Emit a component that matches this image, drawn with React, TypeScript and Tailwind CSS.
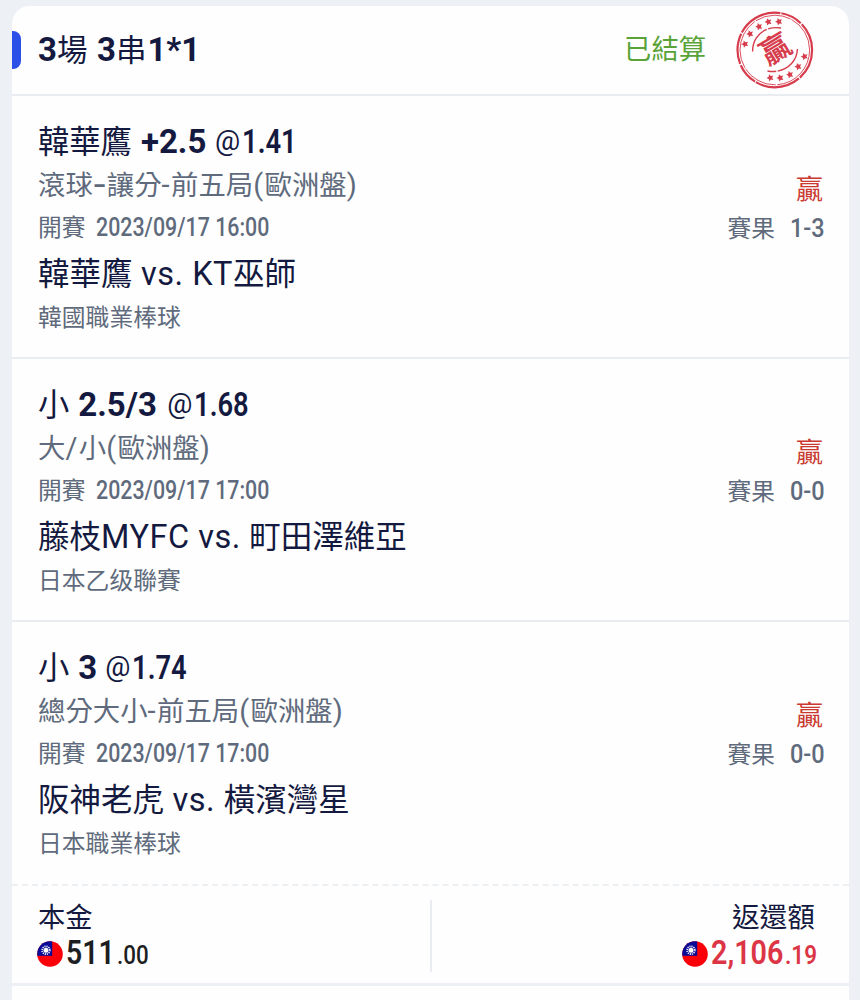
import React from 'react';

const STAMP_RED = '#d63c4c';

function star(cx: number, cy: number, r: number, turn: number) {
  const pts: string[] = [];
  for (let i = 0; i < 10; i++) {
    const a = ((turn + i * 36 - 90) * Math.PI) / 180;
    const rr = i % 2 === 0 ? r : r * 0.5;
    pts.push(`${(cx + rr * Math.cos(a)).toFixed(2)},${(cy + rr * Math.sin(a)).toFixed(2)}`);
  }
  return pts.join(' ');
}

const stars = [
  [10, 34], [15, 23.9], [24, 16.6], [33.3, 11.9], [43.9, 11.6],
  [35.3, 67.8], [45.2, 67.9], [54.9, 64.6], [63.2, 56.6], [69.5, 46.5],
];

function Stamp() {
  return (
    <svg className="block h-[80px] w-[80px]" viewBox="0 0 80 80" fill="none" stroke={STAMP_RED}>
      <circle cx="39.8" cy="40" r="37.3" strokeWidth="2.2" strokeDasharray="31 1.3 46 1 22 1.5" />
      <circle cx="39.8" cy="40" r="34.8" strokeWidth="0.9" strokeDasharray="52 1.5 36 1" />
      <path d="M17.6 41.6C17.5 26.6 29 15.6 46 18" strokeWidth="1.4" strokeDasharray="28 1.5 30" />
      <path d="M62.4 39C62 53.6 48 64 32.5 61" strokeWidth="1.4" strokeDasharray="32 1.5 30" />
      <g fill={STAMP_RED} stroke="none">
        {stars.map(([x, y]) => (
          <polygon key={`${x}-${y}`} points={star(x, y, 3.8, -20)} />
        ))}
        <text
          x="0"
          y="11"
          textAnchor="middle"
          transform="translate(40.3 38.8) rotate(-31)"
          className="font-['Noto_Sans_CJK_TC',sans-serif] text-[30px] font-bold"
        >
          贏
        </text>
      </g>
    </svg>
  );
}

function Flag() {
  return (
    <svg className="block h-[26px] w-[26px] shrink-0" viewBox="0 0 26 26">
      <clipPath id="flag-round">
        <circle cx="13" cy="13" r="12.8" />
      </clipPath>
      <g clipPath="url(#flag-round)">
        <rect width="26" height="26" fill="#fb0008" />
        <rect width="15.2" height="14.8" fill="#0a0a96" />
        <circle cx="9" cy="9.2" r="3.9" fill="none" stroke="#fff" strokeWidth="1.7" strokeDasharray="1.1 0.94" />
        <circle cx="9" cy="9.2" r="2.5" fill="#fff" />
      </g>
    </svg>
  );
}

/** Sets the Latin runs of a mixed string in their own size. */
function Mixed({ text, latin }: { text: string; latin: string }) {
  return (
    <>
      {text.split(/([\x20-\x7e]+)/).map((part, i) =>
        i % 2 === 1 ? (
          <span key={i} className={latin}>
            {part}
          </span>
        ) : (
          part
        ),
      )}
    </>
  );
}

const bets = [
  {
    pick: '韓華鷹',
    line: '+2.5',
    lineClass: 'w-[74px]',
    odds: '1.41',
    phase: '滾球',
    market: '讓分-前五局(歐洲盤)',
    time: '2023/09/17 16:00',
    match: '韓華鷹 vs. KT巫師',
    league: '韓國職業棒球',
    score: '1-3',
  },
  {
    pick: '小',
    line: '2.5/3',
    lineClass: 'w-[89px]',
    odds: '1.68',
    phase: '',
    market: '大/小(歐洲盤)',
    time: '2023/09/17 17:00',
    match: '藤枝MYFC vs. 町田澤維亞',
    league: '日本乙级聯賽',
    score: '0-0',
  },
  {
    pick: '小',
    line: '3',
    lineClass: 'w-[27px]',
    odds: '1.74',
    phase: '',
    market: '總分大小-前五局(歐洲盤)',
    time: '2023/09/17 17:00',
    match: '阪神老虎 vs. 橫濱灣星',
    league: '日本職業棒球',
    score: '0-0',
  },
];

function BetRow({ bet, last }: { bet: (typeof bets)[number]; last: boolean }) {
  return (
    <section
      className={`flex h-[263.2px] justify-between whitespace-nowrap border-b-2 pl-[26px] pr-[26px] pt-6 ${
        last ? 'border-dashed border-[#edf0f3]' : 'border-[#e9edf2]'
      }`}
    >
      <div className="text-[#5f6b7c]">
        <div className="h-[44px] text-[31.3px] leading-[44px] text-[#14193f]">
          <span>{bet.pick}</span>
          <span className={`ml-[9px] inline-block text-[33px] font-bold ${bet.lineClass}`}>{bet.line}</span>
          <span className="relative -top-[3px] inline-block w-[27px] text-[28px]">@</span>
          <span className="inline-block w-[54px] origin-left scale-x-[0.83] text-[33px] font-semibold">{bet.odds}</span>
        </div>
        <div className="h-[42px] text-[27.4px] leading-[42px]">
          {bet.phase && (
            <>
              {bet.phase}
              <span className="inline-block w-[14px] origin-left scale-x-[1.35] text-[29px] font-medium">-</span>
            </>
          )}
          <Mixed text={bet.market} latin="text-[29px] tracking-[1.4px]" />
        </div>
        <div className="h-[42px] text-[23.7px] leading-[42px]">
          開賽
          <span className="ml-[11px] inline-block w-[175px] origin-left scale-x-[0.838] text-[25.5px] font-medium">{bet.time}</span>
        </div>
        <div className="h-[52px] text-[31.5px] leading-[52px] text-[#14193f]">
          <Mixed text={bet.match} latin="text-[32.5px] tracking-[0.5px]" />
        </div>
        <div className="h-[36px] text-[23.8px] leading-[36px]">{bet.league}</div>
      </div>
      <div className="flex flex-col items-end pt-[51px] text-[#5f6b7c]">
        <div className="h-[38px] text-[27px] leading-[38px] text-[#c9392f]">贏</div>
        <div className="h-[38px] text-[23.7px] leading-[38px]">
          賽果
          <span className="ml-[15px] inline-block w-[33px] origin-left scale-x-[0.92] text-[25.5px] font-medium">{bet.score}</span>
        </div>
      </div>
    </section>
  );
}

export default function App() {
  return (
    <main className="h-[1000px] w-[860px] overflow-hidden bg-[#edf1f5] pl-[12px] pr-[11px] pt-[6px] font-['Roboto','Noto_Sans_CJK_TC',sans-serif]">
      <div className="h-[994px] overflow-hidden rounded-t-[18px] bg-[#fefefe]">
        <header className="flex h-[90px] items-center whitespace-nowrap border-b-2 border-[#e9edf2] pr-[34px]">
          <span className="h-[38px] w-[9px] rounded-r-[8px] bg-[#2b50e8]" />
          <h1 className="ml-[17px] flex-1 text-[30.5px] leading-[44px] text-[#14193f]">
            <b className="text-[33px]">3</b>場<b className="ml-[9.5px] text-[33px]">3</b>
            <span>串</span>
            <b className="ml-px text-[33px]">1*1</b>
          </h1>
          <span className="mr-[29px] text-[27.3px] leading-[44px] text-[#5aa339]">已結算</span>
          <Stamp />
        </header>
        {bets.map((bet, i) => (
          <BetRow key={bet.match} bet={bet} last={i === bets.length - 1} />
        ))}
        <footer className="flex h-[100px] whitespace-nowrap border-b-[3px] border-[#edf1f5] pt-[14px]">
          <div className="h-[72px] w-[420px] border-r-2 border-[#e9edf2] pl-[25px]">
            <div className="h-[36px] pl-px text-[27.3px] leading-[36px] text-[#14193f]">本金</div>
            <div className="flex h-[36px] items-center leading-[36px] text-[#1d1e22]">
              <Flag />
              <div className="ml-[3px] flex items-baseline font-semibold">
                <span className="w-[50px] origin-left scale-x-[0.86] text-[33px]">511</span>
                <span className="ml-px w-[32px] origin-left scale-x-[0.86] text-[26px] font-medium">.00</span>
              </div>
            </div>
          </div>
          <div className="flex h-[72px] flex-1 flex-col items-end pr-[32px]">
            <div className="h-[36px] pr-[2px] text-[27.7px] leading-[36px] text-[#14193f]">返還額</div>
            <div className="flex h-[36px] items-center leading-[36px] text-[#dc3545]">
              <Flag />
              <div className="ml-[3px] flex items-baseline font-semibold">
                <span className="w-[74px] origin-left scale-x-[0.87] text-[33px]">2,106</span>
                <span className="w-[32px] origin-left scale-x-[0.86] text-[26px] font-semibold">.19</span>
              </div>
            </div>
          </div>
        </footer>
      </div>
    </main>
  );
}
